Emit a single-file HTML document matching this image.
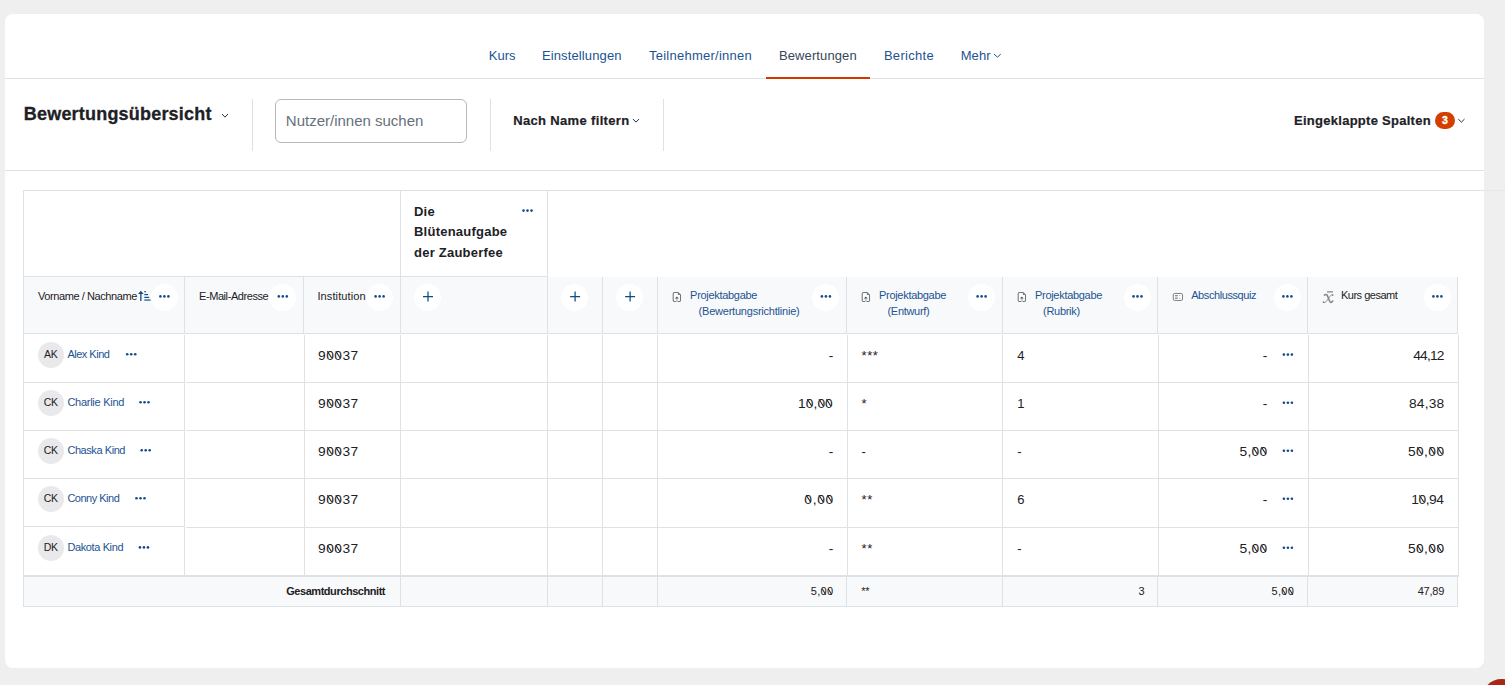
<!DOCTYPE html><html lang="de"><head><meta charset="utf-8"><title>Bewertungsübersicht</title><style>
html,body{margin:0;padding:0;}
body{width:1505px;height:685px;overflow:hidden;background:#efefef;font-family:"Liberation Sans",sans-serif;color:#1d2125;position:relative;}
.abs{position:absolute;}
.card{left:5px;top:14px;width:1479px;height:654px;background:#fff;border-radius:8px;}
.t{position:absolute;white-space:nowrap;line-height:1;}
.ln{position:absolute;background:#dee2e6;}
.nav{font-size:13px;color:#1c5392;}
.circ{position:absolute;width:27px;height:27px;border-radius:50%;background:#fff;}
.dots{position:absolute;width:11px;height:3px;}
.av{position:absolute;width:26px;height:26px;border-radius:50%;background:#e9e9eb;font-size:10.5px;line-height:25px;text-align:center;color:#1d2125;letter-spacing:-0.4px;text-indent:-0.4px;}
.num{font-size:13px;letter-spacing:0.5px;color:#1d2125;}
.hd{font-size:11px;}
.z{position:relative;display:inline-block;}
.z::after{content:'';position:absolute;left:50%;top:50%;width:0.09em;height:0.64em;background:currentColor;transform:translate(-50%,-54%) rotate(-31deg);margin-left:-0.02em;}
</style></head><body>
<div class="abs card"></div>
<div class="t nav" style="left:488.79999999999995px;top:49.00px;font-size:13px;letter-spacing:0px;">Kurs</div>
<div class="t nav" style="left:541.9px;top:49.00px;font-size:13px;letter-spacing:0.13px;">Einstellungen</div>
<div class="t nav" style="left:648.9px;top:49.00px;font-size:13px;letter-spacing:0.26px;">Teilnehmer/innen</div>
<div class="t nav" style="left:778.9px;top:49.00px;font-size:13px;color:#37475a;letter-spacing:0.12px;">Bewertungen</div>
<div class="t nav" style="left:883.9px;top:49.00px;font-size:13px;letter-spacing:0.3px;">Berichte</div>
<div class="t nav" style="left:960.6999999999999px;top:49.00px;font-size:13px;letter-spacing:0.1px;">Mehr</div>
<svg class="abs" style="left:993px;top:53px" width="9" height="6" viewBox="0 0 9 6"><g transform="translate(0.9 0.9)"><path d="M0.45 0.45 L3.5 3.26 L6.55 0.45" fill="none" stroke="#1c5392" stroke-width="1.0" stroke-linecap="round" stroke-linejoin="round"/></g></svg>
<div class="ln" style="left:5px;top:78px;width:1479px;height:1px;"></div>
<div class="abs" style="left:766px;top:77px;width:104px;height:2px;background:#d23700;"></div>
<div class="t " style="left:23.8px;top:104.86px;font-size:18px;font-weight:bold;color:#1d2125;letter-spacing:0.2px;-webkit-text-stroke:0.3px #1d2125;">Bewertungsübersicht</div>
<svg class="abs" style="left:221px;top:113px" width="9" height="6" viewBox="0 0 9 6"><g transform="translate(0.9 0.9)"><path d="M0.45 0.45 L3.1 3.26 L5.75 0.45" fill="none" stroke="#2b2d42" stroke-width="1.0" stroke-linecap="round" stroke-linejoin="round"/></g></svg>
<div class="ln" style="left:252px;top:99px;width:1px;height:52px;"></div>
<div class="ln" style="left:490px;top:99px;width:1px;height:52px;"></div>
<div class="ln" style="left:663px;top:99px;width:1px;height:52px;"></div>
<div class="abs" style="left:275px;top:99px;width:190px;height:42px;border:1px solid #b6b8bb;border-radius:6px;background:#fff;"></div>
<div class="t " style="left:285.8px;top:113.40px;font-size:15px;color:#66707a;">Nutzer/innen suchen</div>
<div class="t " style="left:513.2px;top:114.00px;font-size:13px;font-weight:bold;color:#1d2125;letter-spacing:0.34px;-webkit-text-stroke:0.2px #1d2125;">Nach Name filtern</div>
<svg class="abs" style="left:632px;top:118px" width="9" height="6" viewBox="0 0 9 6"><g transform="translate(0.8 0.9)"><path d="M0.45 0.45 L3.15 3.26 L5.85 0.45" fill="none" stroke="#2b2d42" stroke-width="1.0" stroke-linecap="round" stroke-linejoin="round"/></g></svg>
<div class="t " style="left:1294px;top:113.80px;font-size:13px;font-weight:bold;color:#1d2125;letter-spacing:0.27px;-webkit-text-stroke:0.2px #1d2125;">Eingeklappte Spalten</div>
<div class="abs" style="left:1435px;top:112px;width:20px;height:17px;border-radius:8.7px;background:#d43f00;color:#fff;font-size:10.5px;font-weight:bold;line-height:17.4px;text-align:center;-webkit-text-stroke:0.35px #fff;">3</div>
<svg class="abs" style="left:1458px;top:118px" width="8" height="6" viewBox="0 0 8 6"><g transform="translate(0.1 0.9)"><path d="M0.45 0.45 L3.3 3.26 L6.1499999999999995 0.45" fill="none" stroke="#2b2d42" stroke-width="1.0" stroke-linecap="round" stroke-linejoin="round"/></g></svg>
<div class="ln" style="left:5px;top:170px;width:1479px;height:1px;"></div>
<div class="ln" style="left:23px;top:190px;width:1461px;height:1px;"></div>
<div class="abs" style="left:1484px;top:190px;width:21px;height:1px;background:#e6e8ea;"></div>
<div class="ln" style="left:23px;top:190px;width:1px;height:417px;"></div>
<div class="abs" style="left:24px;top:277px;width:1434px;height:56px;background:#f8f9fa;"></div>
<div class="ln" style="left:24px;top:276px;width:524px;height:1px;"></div>
<div class="ln" style="left:400px;top:190px;width:1px;height:144px;"></div>
<div class="ln" style="left:547px;top:190px;width:1px;height:144px;"></div>
<div class="ln" style="left:184px;top:277px;width:1px;height:57px;"></div>
<div class="ln" style="left:303px;top:277px;width:1px;height:57px;"></div>
<div class="ln" style="left:602px;top:277px;width:1px;height:57px;"></div>
<div class="ln" style="left:657px;top:277px;width:1px;height:57px;"></div>
<div class="ln" style="left:846px;top:277px;width:1px;height:57px;"></div>
<div class="ln" style="left:1002px;top:277px;width:1px;height:57px;"></div>
<div class="ln" style="left:1157px;top:277px;width:1px;height:57px;"></div>
<div class="ln" style="left:1307px;top:277px;width:1px;height:57px;"></div>
<div class="ln" style="left:1457px;top:277px;width:1px;height:57px;"></div>
<div class="ln" style="left:24px;top:333px;width:1434px;height:1px;"></div>
<div class="ln" style="left:184px;top:335px;width:1px;height:240px;"></div>
<div class="ln" style="left:304px;top:335px;width:1px;height:240px;"></div>
<div class="ln" style="left:400px;top:335px;width:1px;height:240px;"></div>
<div class="ln" style="left:547px;top:335px;width:1px;height:240px;"></div>
<div class="ln" style="left:602px;top:335px;width:1px;height:240px;"></div>
<div class="ln" style="left:657px;top:335px;width:1px;height:240px;"></div>
<div class="ln" style="left:847px;top:335px;width:1px;height:240px;"></div>
<div class="ln" style="left:1002px;top:335px;width:1px;height:240px;"></div>
<div class="ln" style="left:1158px;top:335px;width:1px;height:240px;"></div>
<div class="ln" style="left:1308px;top:335px;width:1px;height:240px;"></div>
<div class="ln" style="left:1458px;top:335px;width:1px;height:240px;"></div>
<div class="ln" style="left:24px;top:382px;width:161px;height:1px;"></div>
<div class="ln" style="left:24px;top:430px;width:161px;height:1px;"></div>
<div class="ln" style="left:24px;top:478px;width:161px;height:1px;"></div>
<div class="ln" style="left:24px;top:526px;width:161px;height:1px;"></div>
<div class="ln" style="left:186px;top:382px;width:1273px;height:1px;"></div>
<div class="ln" style="left:186px;top:430px;width:1273px;height:1px;"></div>
<div class="ln" style="left:186px;top:478px;width:1273px;height:1px;"></div>
<div class="ln" style="left:186px;top:527px;width:1273px;height:1px;"></div>
<div class="abs" style="left:24px;top:577px;width:1434px;height:29px;background:#f8f9fa;"></div>
<div class="ln" style="left:24px;top:575px;width:1435px;height:2px;"></div>
<div class="ln" style="left:24px;top:606px;width:1434px;height:1px;"></div>
<div class="ln" style="left:400px;top:577px;width:1px;height:30px;"></div>
<div class="ln" style="left:547px;top:577px;width:1px;height:30px;"></div>
<div class="ln" style="left:602px;top:577px;width:1px;height:30px;"></div>
<div class="ln" style="left:657px;top:577px;width:1px;height:30px;"></div>
<div class="ln" style="left:846px;top:577px;width:1px;height:30px;"></div>
<div class="ln" style="left:1002px;top:577px;width:1px;height:30px;"></div>
<div class="ln" style="left:1157px;top:577px;width:1px;height:30px;"></div>
<div class="ln" style="left:1307px;top:577px;width:1px;height:30px;"></div>
<div class="ln" style="left:1457px;top:577px;width:1px;height:30px;"></div>
<div class="t " style="left:414.0px;top:204.80px;font-size:13px;font-weight:bold;color:#1d2125;letter-spacing:0.23px;">Die</div>
<div class="t " style="left:414.0px;top:225.40px;font-size:13px;font-weight:bold;color:#1d2125;letter-spacing:0.23px;">Blütenaufgabe</div>
<div class="t " style="left:414.0px;top:246.00px;font-size:13px;font-weight:bold;color:#1d2125;letter-spacing:0.23px;">der Zauberfee</div>
<svg class="abs" style="left:521px;top:208px" width="14" height="6" viewBox="0 0 14 6"><g transform="translate(0.5 0.6)"><circle cx="2" cy="2" r="1.3" fill="#154c8c"/><circle cx="6" cy="2" r="1.3" fill="#154c8c"/><circle cx="10" cy="2" r="1.3" fill="#154c8c"/></g></svg>
<div class="t hd" style="left:38.0px;top:290.69px;font-size:11px;color:#1d2125;letter-spacing:-0.42px;">Vorname / Nachname</div>
<div class="circ" style="left:150.9px;top:283.7px;"></div>
<svg class="abs" style="left:158px;top:294px" width="14" height="6" viewBox="0 0 14 6"><g transform="translate(0.4 0.4)"><circle cx="2" cy="2" r="1.3" fill="#154c8c"/><circle cx="6" cy="2" r="1.3" fill="#154c8c"/><circle cx="10" cy="2" r="1.3" fill="#154c8c"/></g></svg>
<div class="t hd" style="left:199px;top:290.69px;font-size:11px;color:#1d2125;letter-spacing:-0.42px;">E-Mail-Adresse</div>
<div class="circ" style="left:269.2px;top:283.7px;"></div>
<svg class="abs" style="left:276px;top:294px" width="14" height="6" viewBox="0 0 14 6"><g transform="translate(0.8 0.4)"><circle cx="2" cy="2" r="1.3" fill="#154c8c"/><circle cx="6" cy="2" r="1.3" fill="#154c8c"/><circle cx="10" cy="2" r="1.3" fill="#154c8c"/></g></svg>
<div class="t hd" style="left:317.4px;top:290.69px;font-size:11px;color:#1d2125;letter-spacing:0.12px;">Institution</div>
<div class="circ" style="left:366.0px;top:283.7px;"></div>
<svg class="abs" style="left:373px;top:294px" width="14" height="6" viewBox="0 0 14 6"><g transform="translate(0.6 0.4)"><circle cx="2" cy="2" r="1.3" fill="#154c8c"/><circle cx="6" cy="2" r="1.3" fill="#154c8c"/><circle cx="10" cy="2" r="1.3" fill="#154c8c"/></g></svg>
<div class="circ" style="left:413.9px;top:283.5px;"></div>
<svg class="abs" style="left:423px;top:291px" width="11" height="12" viewBox="0 0 11 12"><g transform="translate(0.0 0.5)"><path d="M5 0V10M0 5H10" stroke="#0f4c81" stroke-width="1.25" fill="none"/></g></svg>
<div class="circ" style="left:561.0px;top:283.5px;"></div>
<svg class="abs" style="left:570px;top:291px" width="12" height="12" viewBox="0 0 12 12"><g transform="translate(0.1 0.5)"><path d="M5 0V10M0 5H10" stroke="#0f4c81" stroke-width="1.25" fill="none"/></g></svg>
<div class="circ" style="left:616.0px;top:283.5px;"></div>
<svg class="abs" style="left:625px;top:291px" width="12" height="12" viewBox="0 0 12 12"><g transform="translate(0.1 0.5)"><path d="M5 0V10M0 5H10" stroke="#0f4c81" stroke-width="1.25" fill="none"/></g></svg>
<svg class="abs" style="left:672px;top:292px" width="11" height="12" viewBox="0 0 11 12"><g transform="translate(0.6 0.0)"><path d="M2 0.55H5.5L7.9 2.9V8.3Q7.9 9.45 6.8 9.45H1.9Q0.6 9.45 0.6 8.3V1.8Q0.6 0.55 2 0.55Z" fill="#fdfdfd" stroke="#70767c" stroke-width="1.05" stroke-linejoin="round"/><path d="M5.3 0.7V3.1H7.8Z" fill="#70767c"/><rect x="3.3" y="6.3" width="1.9" height="3.7" fill="#c6c8cb"/><path d="M2.3 6.5L4.25 4.4L6.2 6.5Z" fill="#4d5359"/></g></svg>
<div class="t hd" style="left:690.1px;top:289.69px;font-size:11px;color:#1c5392;letter-spacing:-0.3px;">Projektabgabe</div>
<div class="t hd" style="left:698.6px;top:305.69px;font-size:11px;color:#1c5392;letter-spacing:-0.22px;">(Bewertungsrichtlinie)</div>
<div class="circ" style="left:812.3px;top:283.7px;"></div>
<svg class="abs" style="left:819px;top:294px" width="14" height="6" viewBox="0 0 14 6"><g transform="translate(0.9 0.4)"><circle cx="2" cy="2" r="1.3" fill="#154c8c"/><circle cx="6" cy="2" r="1.3" fill="#154c8c"/><circle cx="10" cy="2" r="1.3" fill="#154c8c"/></g></svg>
<svg class="abs" style="left:861px;top:292px" width="11" height="12" viewBox="0 0 11 12"><g transform="translate(0.6 0.0)"><path d="M2 0.55H5.5L7.9 2.9V8.3Q7.9 9.45 6.8 9.45H1.9Q0.6 9.45 0.6 8.3V1.8Q0.6 0.55 2 0.55Z" fill="#fdfdfd" stroke="#70767c" stroke-width="1.05" stroke-linejoin="round"/><path d="M5.3 0.7V3.1H7.8Z" fill="#70767c"/><rect x="3.3" y="6.3" width="1.9" height="3.7" fill="#c6c8cb"/><path d="M2.3 6.5L4.25 4.4L6.2 6.5Z" fill="#4d5359"/></g></svg>
<div class="t hd" style="left:879.0px;top:289.69px;font-size:11px;color:#1c5392;letter-spacing:-0.3px;">Projektabgabe</div>
<div class="t hd" style="left:887.5px;top:305.69px;font-size:11px;color:#1c5392;letter-spacing:-0.3px;">(Entwurf)</div>
<div class="circ" style="left:968.0px;top:283.7px;"></div>
<svg class="abs" style="left:975px;top:294px" width="14" height="6" viewBox="0 0 14 6"><g transform="translate(0.6 0.4)"><circle cx="2" cy="2" r="1.3" fill="#154c8c"/><circle cx="6" cy="2" r="1.3" fill="#154c8c"/><circle cx="10" cy="2" r="1.3" fill="#154c8c"/></g></svg>
<svg class="abs" style="left:1017px;top:292px" width="11" height="12" viewBox="0 0 11 12"><g transform="translate(0.6 0.0)"><path d="M2 0.55H5.5L7.9 2.9V8.3Q7.9 9.45 6.8 9.45H1.9Q0.6 9.45 0.6 8.3V1.8Q0.6 0.55 2 0.55Z" fill="#fdfdfd" stroke="#70767c" stroke-width="1.05" stroke-linejoin="round"/><path d="M5.3 0.7V3.1H7.8Z" fill="#70767c"/><rect x="3.3" y="6.3" width="1.9" height="3.7" fill="#c6c8cb"/><path d="M2.3 6.5L4.25 4.4L6.2 6.5Z" fill="#4d5359"/></g></svg>
<div class="t hd" style="left:1035.0px;top:289.69px;font-size:11px;color:#1c5392;letter-spacing:-0.3px;">Projektabgabe</div>
<div class="t hd" style="left:1043.1px;top:305.69px;font-size:11px;color:#1c5392;letter-spacing:-0.3px;">(Rubrik)</div>
<div class="circ" style="left:1123.9px;top:283.7px;"></div>
<svg class="abs" style="left:1131px;top:294px" width="14" height="6" viewBox="0 0 14 6"><g transform="translate(0.5 0.4)"><circle cx="2" cy="2" r="1.3" fill="#154c8c"/><circle cx="6" cy="2" r="1.3" fill="#154c8c"/><circle cx="10" cy="2" r="1.3" fill="#154c8c"/></g></svg>
<svg class="abs" style="left:1172px;top:292px" width="13" height="11" viewBox="0 0 13 11"><g transform="translate(0.7 0.9)"><rect x="0.55" y="0.55" width="9.3" height="7.0" rx="1.4" fill="#fdfdfd" stroke="#73797f" stroke-width="0.95"/><rect x="2.3" y="2.5" width="2.8" height="3.1" fill="#dadcdf"/><path d="M2.2 2.7H5.2M2.2 5.4H5.2" stroke="#73797f" stroke-width="0.9"/><path d="M6.5 2.7H7.8M6.5 5.4H7.8" stroke="#a5aaaf" stroke-width="0.9"/></g></svg>
<div class="t hd" style="left:1191.2px;top:289.69px;font-size:11px;color:#1c5392;letter-spacing:-0.42px;">Abschlussquiz</div>
<div class="circ" style="left:1273.8px;top:283.7px;"></div>
<svg class="abs" style="left:1281px;top:294px" width="14" height="6" viewBox="0 0 14 6"><g transform="translate(0.4 0.4)"><circle cx="2" cy="2" r="1.3" fill="#154c8c"/><circle cx="6" cy="2" r="1.3" fill="#154c8c"/><circle cx="10" cy="2" r="1.3" fill="#154c8c"/></g></svg>
<svg class="abs" style="left:1322px;top:291px" width="14" height="15" viewBox="0 0 14 15"><g transform="translate(0.4 0.0)"><rect x="4.6" y="0.2" width="6" height="1.4" rx="0.4" fill="#868686"/><path d="M2.0 4.1 C3.4 3.1 4.5 3.4 5.1 4.9 L7.3 10.3 C7.9 11.8 9.0 12.0 10.3 10.0" fill="none" stroke="#868686" stroke-width="1.55" stroke-linecap="round"/><path d="M10.2 4.0 C9.2 3.4 8.4 4.2 7.4 5.6 L4.0 10.2 C3.0 11.5 2.0 12.0 1.0 11.4" fill="none" stroke="#868686" stroke-width="0.9" stroke-linecap="round"/><circle cx="10.3" cy="4.1" r="0.85" fill="#868686"/><circle cx="1.1" cy="11.2" r="0.85" fill="#868686"/></g></svg>
<div class="t hd" style="left:1341px;top:289.69px;font-size:11px;color:#1d2125;letter-spacing:-0.5px;">Kurs gesamt</div>
<div class="circ" style="left:1423.8px;top:283.7px;"></div>
<svg class="abs" style="left:1431px;top:294px" width="14" height="6" viewBox="0 0 14 6"><g transform="translate(0.4 0.4)"><circle cx="2" cy="2" r="1.3" fill="#154c8c"/><circle cx="6" cy="2" r="1.3" fill="#154c8c"/><circle cx="10" cy="2" r="1.3" fill="#154c8c"/></g></svg>
<svg class="abs" style="left:137px;top:290px" width="16" height="13" viewBox="0 0 16 13"><g transform="translate(0.9 0.7)"><path d="M2.95 0.1L0.2 3.2H2.3V10.2H3.6V3.2H5.7Z" fill="#0f4c86"/><rect x="6.4" y="0.4" width="1.7" height="1.2" fill="#0f4c86"/><rect x="6.4" y="3.3" width="3.8" height="1.2" fill="#0f4c86"/><rect x="6.4" y="6.1" width="4.9" height="1.2" fill="#0f4c86"/><rect x="6.4" y="8.5" width="6.3" height="1.7" fill="#5580aa"/></g></svg>
<div class="av" style="left:37.9px;top:341.8px;">AK</div>
<div class="t hd" style="left:67.4px;top:348.89px;font-size:11px;color:#1c5392;letter-spacing:-0.5px;">Alex Kind</div>
<svg class="abs" style="left:125px;top:352px" width="14" height="6" viewBox="0 0 14 6"><g transform="translate(0.2 0.2)"><circle cx="2" cy="2" r="1.3" fill="#154c8c"/><circle cx="6" cy="2" r="1.3" fill="#154c8c"/><circle cx="10" cy="2" r="1.3" fill="#154c8c"/></g></svg>
<div class="t num" style="left:318.3px;top:348.80px;font-size:13px;letter-spacing:0.44px;transform:scaleX(1.06);transform-origin:left;">9<span class="z">0</span><span class="z">0</span>37</div>
<div class="t" style="right:672.0px;top:348.80px;font-size:13px;letter-spacing:0px;color:#1d2125;transform:scaleX(1.06);transform-origin:right;">-</div>
<div class="t num" style="left:861.6px;top:348.80px;font-size:13px;">***</div>
<div class="t num" style="left:1017.2px;top:348.80px;font-size:13px;">4</div>
<div class="t" style="right:238.0px;top:348.80px;font-size:13px;letter-spacing:0px;color:#1d2125;transform:scaleX(1.06);transform-origin:right;">-</div>
<svg class="abs" style="left:1281px;top:352px" width="14" height="6" viewBox="0 0 14 6"><g transform="translate(0.9 0.6)"><circle cx="2" cy="2" r="1.3" fill="#154c8c"/><circle cx="6" cy="2" r="1.3" fill="#154c8c"/><circle cx="10" cy="2" r="1.3" fill="#154c8c"/></g></svg>
<div class="t" style="right:61.847999999999956px;top:348.80px;font-size:13px;letter-spacing:-0.8px;color:#1d2125;transform:scaleX(1.06);transform-origin:right;">44,12</div>
<div class="av" style="left:37.9px;top:389.9px;">CK</div>
<div class="t hd" style="left:67.4px;top:396.99px;font-size:11px;color:#1c5392;letter-spacing:-0.27px;">Charlie Kind</div>
<svg class="abs" style="left:138px;top:400px" width="14" height="6" viewBox="0 0 14 6"><g transform="translate(0.55 0.3)"><circle cx="2" cy="2" r="1.3" fill="#154c8c"/><circle cx="6" cy="2" r="1.3" fill="#154c8c"/><circle cx="10" cy="2" r="1.3" fill="#154c8c"/></g></svg>
<div class="t num" style="left:318.3px;top:396.90px;font-size:13px;letter-spacing:0.44px;transform:scaleX(1.06);transform-origin:left;">9<span class="z">0</span><span class="z">0</span>37</div>
<div class="t" style="right:671.9364px;top:396.90px;font-size:13px;letter-spacing:0.06px;color:#1d2125;transform:scaleX(1.06);transform-origin:right;">1<span class="z">0</span>,<span class="z">0</span><span class="z">0</span></div>
<div class="t num" style="left:861.6px;top:396.90px;font-size:13px;">*</div>
<div class="t num" style="left:1017.2px;top:396.90px;font-size:13px;">1</div>
<div class="t" style="right:238.0px;top:396.90px;font-size:13px;letter-spacing:0px;color:#1d2125;transform:scaleX(1.06);transform-origin:right;">-</div>
<svg class="abs" style="left:1281px;top:400px" width="14" height="6" viewBox="0 0 14 6"><g transform="translate(0.9 0.7)"><circle cx="2" cy="2" r="1.3" fill="#154c8c"/><circle cx="6" cy="2" r="1.3" fill="#154c8c"/><circle cx="10" cy="2" r="1.3" fill="#154c8c"/></g></svg>
<div class="t" style="right:60.830400000000054px;top:396.90px;font-size:13px;letter-spacing:0.16px;color:#1d2125;transform:scaleX(1.06);transform-origin:right;">84,38</div>
<div class="av" style="left:37.9px;top:437.9px;">CK</div>
<div class="t hd" style="left:67.4px;top:444.99px;font-size:11px;color:#1c5392;letter-spacing:-0.43px;">Chaska Kind</div>
<svg class="abs" style="left:139px;top:448px" width="14" height="6" viewBox="0 0 14 6"><g transform="translate(0.7 0.3)"><circle cx="2" cy="2" r="1.3" fill="#154c8c"/><circle cx="6" cy="2" r="1.3" fill="#154c8c"/><circle cx="10" cy="2" r="1.3" fill="#154c8c"/></g></svg>
<div class="t num" style="left:318.3px;top:444.90px;font-size:13px;letter-spacing:0.44px;transform:scaleX(1.06);transform-origin:left;">9<span class="z">0</span><span class="z">0</span>37</div>
<div class="t" style="right:672.0px;top:444.90px;font-size:13px;letter-spacing:0px;color:#1d2125;transform:scaleX(1.06);transform-origin:right;">-</div>
<div class="t num" style="left:861.6px;top:444.90px;font-size:13px;">-</div>
<div class="t num" style="left:1017.2px;top:444.90px;font-size:13px;">-</div>
<div class="t" style="right:237.68200000000002px;top:444.90px;font-size:13px;letter-spacing:0.3px;color:#1d2125;transform:scaleX(1.06);transform-origin:right;">5,<span class="z">0</span><span class="z">0</span></div>
<svg class="abs" style="left:1281px;top:448px" width="14" height="6" viewBox="0 0 14 6"><g transform="translate(0.9 0.7)"><circle cx="2" cy="2" r="1.3" fill="#154c8c"/><circle cx="6" cy="2" r="1.3" fill="#154c8c"/><circle cx="10" cy="2" r="1.3" fill="#154c8c"/></g></svg>
<div class="t" style="right:60.58660000000009px;top:444.90px;font-size:13px;letter-spacing:0.39px;color:#1d2125;transform:scaleX(1.06);transform-origin:right;">5<span class="z">0</span>,<span class="z">0</span><span class="z">0</span></div>
<div class="av" style="left:37.9px;top:485.9px;">CK</div>
<div class="t hd" style="left:67.4px;top:492.99px;font-size:11px;color:#1c5392;letter-spacing:-0.5px;">Conny Kind</div>
<svg class="abs" style="left:134px;top:496px" width="14" height="6" viewBox="0 0 14 6"><g transform="translate(0.5 0.3)"><circle cx="2" cy="2" r="1.3" fill="#154c8c"/><circle cx="6" cy="2" r="1.3" fill="#154c8c"/><circle cx="10" cy="2" r="1.3" fill="#154c8c"/></g></svg>
<div class="t num" style="left:318.3px;top:492.90px;font-size:13px;letter-spacing:0.44px;transform:scaleX(1.06);transform-origin:left;">9<span class="z">0</span><span class="z">0</span>37</div>
<div class="t" style="right:671.3322px;top:492.90px;font-size:13px;letter-spacing:0.63px;color:#1d2125;transform:scaleX(1.06);transform-origin:right;"><span class="z">0</span>,<span class="z">0</span><span class="z">0</span></div>
<div class="t num" style="left:861.6px;top:492.90px;font-size:13px;">**</div>
<div class="t num" style="left:1017.2px;top:492.90px;font-size:13px;">6</div>
<div class="t" style="right:238.0px;top:492.90px;font-size:13px;letter-spacing:0px;color:#1d2125;transform:scaleX(1.06);transform-origin:right;">-</div>
<svg class="abs" style="left:1281px;top:496px" width="14" height="6" viewBox="0 0 14 6"><g transform="translate(0.9 0.7)"><circle cx="2" cy="2" r="1.3" fill="#154c8c"/><circle cx="6" cy="2" r="1.3" fill="#154c8c"/><circle cx="10" cy="2" r="1.3" fill="#154c8c"/></g></svg>
<div class="t" style="right:61.434600000000046px;top:492.90px;font-size:13px;letter-spacing:-0.41px;color:#1d2125;transform:scaleX(1.06);transform-origin:right;">1<span class="z">0</span>,94</div>
<div class="av" style="left:37.9px;top:535.0px;">DK</div>
<div class="t hd" style="left:67.4px;top:542.09px;font-size:11px;color:#1c5392;letter-spacing:-0.38px;">Dakota Kind</div>
<svg class="abs" style="left:137px;top:545px" width="14" height="6" viewBox="0 0 14 6"><g transform="translate(0.95 0.4)"><circle cx="2" cy="2" r="1.3" fill="#154c8c"/><circle cx="6" cy="2" r="1.3" fill="#154c8c"/><circle cx="10" cy="2" r="1.3" fill="#154c8c"/></g></svg>
<div class="t num" style="left:318.3px;top:542.00px;font-size:13px;letter-spacing:0.44px;transform:scaleX(1.06);transform-origin:left;">9<span class="z">0</span><span class="z">0</span>37</div>
<div class="t" style="right:672.0px;top:542.00px;font-size:13px;letter-spacing:0px;color:#1d2125;transform:scaleX(1.06);transform-origin:right;">-</div>
<div class="t num" style="left:861.6px;top:542.00px;font-size:13px;">**</div>
<div class="t num" style="left:1017.2px;top:542.00px;font-size:13px;">-</div>
<div class="t" style="right:237.68200000000002px;top:542.00px;font-size:13px;letter-spacing:0.3px;color:#1d2125;transform:scaleX(1.06);transform-origin:right;">5,<span class="z">0</span><span class="z">0</span></div>
<svg class="abs" style="left:1281px;top:545px" width="14" height="6" viewBox="0 0 14 6"><g transform="translate(0.9 0.8)"><circle cx="2" cy="2" r="1.3" fill="#154c8c"/><circle cx="6" cy="2" r="1.3" fill="#154c8c"/><circle cx="10" cy="2" r="1.3" fill="#154c8c"/></g></svg>
<div class="t" style="right:60.58660000000009px;top:542.00px;font-size:13px;letter-spacing:0.39px;color:#1d2125;transform:scaleX(1.06);transform-origin:right;">5<span class="z">0</span>,<span class="z">0</span><span class="z">0</span></div>
<div class="t " style="left:286.2px;top:586.09px;font-size:11px;font-weight:bold;color:#1d2125;letter-spacing:-0.45px;">Gesamtdurchschnitt</div>
<div class="t" style="right:671.6px;top:586.19px;font-size:11px;letter-spacing:0.3px;">5,<span class="z">0</span><span class="z">0</span></div>
<div class="t " style="left:861.2px;top:586.19px;font-size:11px;letter-spacing:-0.3px;">**</div>
<div class="t" style="right:360.4000000000001px;top:586.19px;font-size:11px;">3</div>
<div class="t" style="right:210.79999999999995px;top:586.19px;font-size:11px;letter-spacing:0.3px;">5,<span class="z">0</span><span class="z">0</span></div>
<div class="t" style="right:61.0px;top:586.19px;font-size:11px;letter-spacing:-0.25px;">47,89</div>
<div class="abs" style="left:1482.4px;top:678.8px;width:39.2px;height:39.2px;border-radius:50%;background:#a82815;"></div>
</body></html>
